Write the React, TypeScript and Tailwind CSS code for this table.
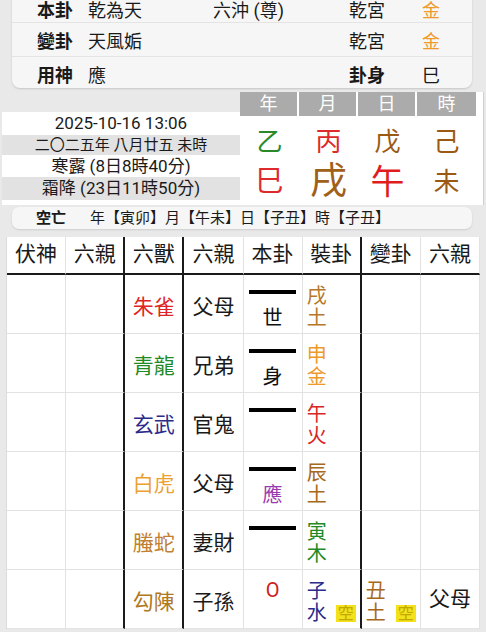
const brown = "text-[#a8681c]";
const orange = "text-[#ee9a2a]";
const red = "text-[#d82626]";
const green = "text-[#1f8a26]";
const navy = "text-[#2b2b8c]";

type Row = {
  beast: string;
  beastColor: string;
  kin: string;
  moving?: boolean;
  mark?: string;
  markColor?: string;
  zhi: [string, string];
  zhiColor: string;
  kong?: boolean;
  change?: [string, string];
  changeColor?: string;
  changeKong?: boolean;
  changeKin?: string;
};

const rows: Row[] = [
  { beast: "朱雀", beastColor: "text-[#e02424]", kin: "父母", mark: "世", markColor: "text-[#111]", zhi: ["戌", "土"], zhiColor: "text-[#b5782a]" },
  { beast: "青龍", beastColor: green, kin: "兄弟", mark: "身", markColor: "text-[#111]", zhi: ["申", "金"], zhiColor: orange },
  { beast: "玄武", beastColor: navy, kin: "官鬼", zhi: ["午", "火"], zhiColor: red },
  { beast: "白虎", beastColor: "text-[#eca032]", kin: "父母", mark: "應", markColor: "text-[#9a3ab0]", zhi: ["辰", "土"], zhiColor: brown },
  { beast: "螣蛇", beastColor: "text-[#c08030]", kin: "妻財", zhi: ["寅", "木"], zhiColor: green },
  {
    beast: "勾陳", beastColor: "text-[#b07820]", kin: "子孫", moving: true, zhi: ["子", "水"], zhiColor: navy, kong: true,
    change: ["丑", "土"], changeColor: brown, changeKong: true, changeKin: "父母",
  },
];

const headers = ["伏神", "六親", "六獸", "六親", "本卦", "裝卦", "變卦", "六親"];
// columns followed by a dark rule
const darkAfter = [1, 2, 5];

function Kong() {
  return (
    <span className="absolute right-[4px] bottom-[6px] bg-[#f3e21b] text-[#c2a800] text-[16px] leading-[17px] px-[2px]">空</span>
  );
}

function InfoRow({ label, value, extra, right, rightBold, tail, tailColor, h, pt, last }: {
  label: string; value: string; extra?: string; right: string; rightBold?: boolean; tail: string; tailColor?: string; h: string; pt: string; last?: boolean;
}) {
  return (
    <div className={`flex items-center ${h} ${pt} ${last ? "" : "border-b border-[#e4e4e4]"}`}>
      <span className="ml-[25px] w-[36px] font-bold">{label}</span>
      <span className="ml-[15px] w-[125px]">{value}</span>
      <span className="w-[136px]">{extra}</span>
      <span className={`w-[73px] ${rightBold ? "font-bold" : ""}`}>{right}</span>
      <span className={tailColor ?? ""}>{tail}</span>
    </div>
  );
}

export default function App() {
  return (
    <div className="w-[486px] h-[632px] overflow-hidden bg-[#e9e9e9] text-[#1a1a1a] font-['Roboto','Noto_Sans_CJK_TC',sans-serif]">
      {/* hexagram summary */}
      <div className="mx-[12px] w-[460px] -mt-[10px] bg-[#f6f6f6] rounded-b-[8px] shadow-[0_1px_2px_rgba(0,0,0,0.15)] text-[18px]">
        <InfoRow h="h-[33px]" pt="pt-[8px]" label="本卦" value="乾為天" extra="六沖 (尊)" right="乾宮" tail="金" tailColor={orange} />
        <InfoRow h="h-[34px]" pt="pt-[4px]" label="變卦" value="天風姤" right="乾宮" tail="金" tailColor={orange} />
        <InfoRow h="h-[31px]" pt="pt-[6px]" label="用神" value="應" right="卦身" rightBold tail="巳" last />
      </div>

      {/* date + four pillars */}
      <div className="flex mt-[4px]">
        <div className="w-[240px] pt-[20px]">
          <div className="bg-white ml-[2px] text-center">
            <div className="h-[23px] leading-[23px] text-[17px]">2025-10-16 13:06</div>
            <div className="h-[20px] leading-[20px] text-[15px] bg-[#e2e2e2]">二〇二五年 八月廿五 未時</div>
            <div className="h-[22px] leading-[22px] text-[17px]">寒露 (8日8時40分)</div>
            <div className="h-[23px] leading-[23px] text-[17px] bg-[#e2e2e2]">霜降 (23日11時50分)</div>
            <div className="h-[5px]" />
          </div>
        </div>
        <div className="w-[244px] bg-white border-r border-[#cfcfcf]">
          <div className="grid grid-cols-4 w-[236px] h-[24px] bg-[#ababab] text-white text-[18px] leading-[24px] text-center">
            <div className="border-r-2 border-white">年</div>
            <div className="border-r-2 border-white">月</div>
            <div className="border-r-2 border-white">日</div>
            <div>時</div>
          </div>
          <div className="grid grid-cols-4 w-[236px] text-center text-[26px] leading-[40px] pt-[6px]">
            <div className="text-[#2a8a2a]">乙</div>
            <div className="text-[#dd2a2a]">丙</div>
            <div className="text-[#9a5a14]">戊</div>
            <div className="text-[#9a5a14]">己</div>
          </div>
          <div className="grid grid-cols-4 w-[236px] text-center leading-[40px] items-center">
            <div className="text-[#dd2a2a] text-[28px]">巳</div>
            <div className="text-[#a0601a] text-[37px]">戌</div>
            <div className="text-[#e01c1c] text-[34px]">午</div>
            <div className="text-[#9a5a14] text-[26px]">未</div>
          </div>
        </div>
      </div>

      {/* void branches */}
      <div className="mx-[12px] mt-[2px] w-[460px] h-[22px] bg-[#f6f6f6] rounded-[7px] shadow-[0_1px_2px_rgba(0,0,0,0.12)] flex items-center text-[15px]">
        <span className="pl-[24px] w-[78px] font-bold">空亡</span>
        <span>年【寅卯】月【午未】日【子丑】時【子丑】</span>
      </div>

      {/* hexagram table */}
      <div className="ml-[6px] mt-[8px] w-[474px] bg-white border-l border-[#dcdcdc] grid grid-cols-8">
        {headers.map((t, i) => (
          <div
            key={"h" + i}
            className={`h-[38px] flex items-center justify-center text-[21px] border-b-2 border-b-[#1a1a1a] border-r ${darkAfter.includes(i) ? "border-r-[#1a1a1a] border-r-2" : "border-r-[#e2e2e2]"}`}
          >
            {t}
          </div>
        ))}
        {rows.map((r, ri) =>
          Array.from({ length: 8 }).map((_, i) => {
            const cls = `relative h-[59px] border-b border-b-[#e2e2e2] border-r ${darkAfter.includes(i) ? "border-r-[#1a1a1a] border-r-2" : "border-r-[#e2e2e2]"}`;
            let body: React.ReactNode = null;
            if (i === 2) body = <div className={`h-full flex items-center justify-center pt-[8px] text-[21px] ${r.beastColor}`}>{r.beast}</div>;
            if (i === 3) body = <div className="h-full flex items-center justify-center pt-[8px] text-[21px]">{r.kin}</div>;
            if (i === 4)
              body = r.moving ? (
                <div className="flex justify-center pt-[8px] text-[20px] leading-[24px] text-[#d02020]">O</div>
              ) : (
                <div className="flex flex-col items-center">
                  <div className="mt-[15px] h-[4px] w-[47px] bg-black" />
                  {r.mark && <div className={`mt-[12px] text-[20px] leading-[24px] ${r.markColor}`}>{r.mark}</div>}
                </div>
              );
            if (i === 5)
              body = (
                <>
                  <div className={`h-full flex flex-col justify-center pl-[4px] pt-[6px] text-[20px] leading-[22px] ${r.zhiColor}`}>
                    <span>{r.zhi[0]}</span>
                    <span>{r.zhi[1]}</span>
                  </div>
                  {r.kong && <Kong />}
                </>
              );
            if (i === 6 && r.change)
              body = (
                <>
                  <div className={`h-full flex flex-col justify-center pl-[4px] pt-[6px] text-[20px] leading-[22px] ${r.changeColor}`}>
                    <span>{r.change[0]}</span>
                    <span>{r.change[1]}</span>
                  </div>
                  {r.changeKong && <Kong />}
                </>
              );
            if (i === 7 && r.changeKin) body = <div className="h-full flex items-center justify-center pt-[2px] text-[21px]">{r.changeKin}</div>;
            return (
              <div key={ri + "-" + i} className={cls}>
                {body}
              </div>
            );
          })
        )}
      </div>
    </div>
  );
}
